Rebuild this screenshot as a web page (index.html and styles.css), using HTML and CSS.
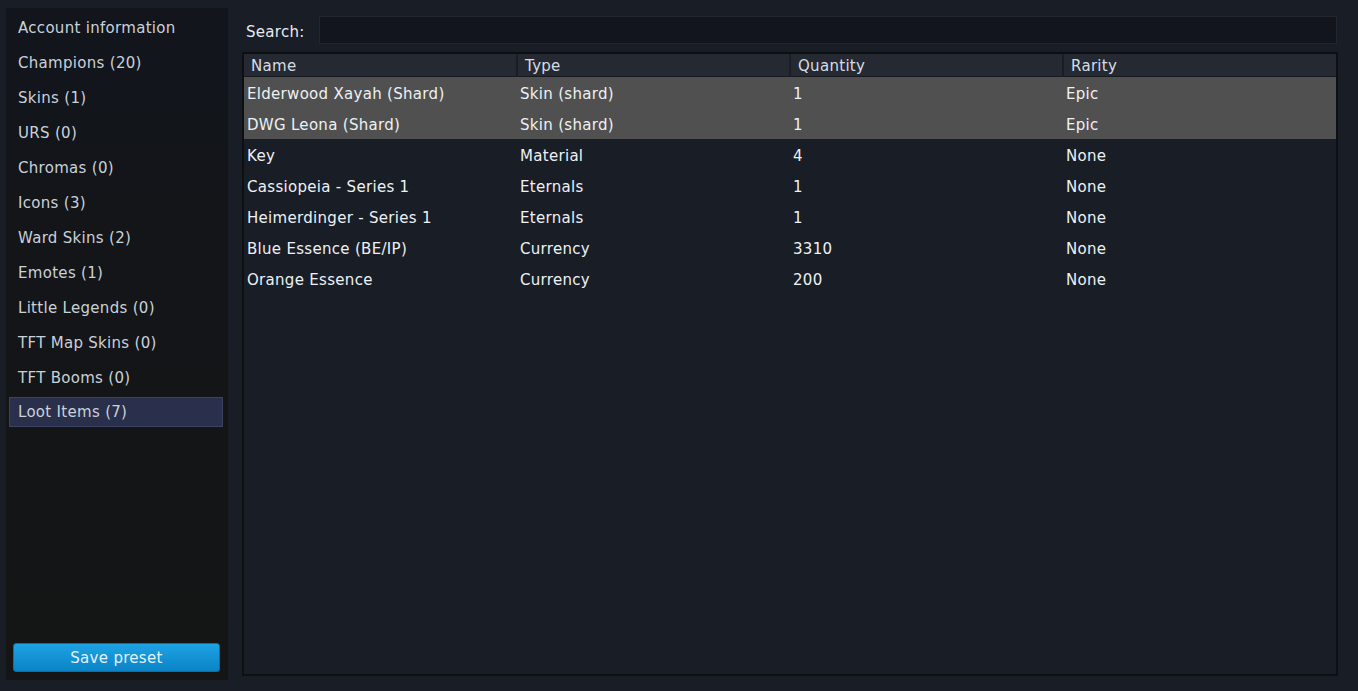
FILE: index.html
```html
<!DOCTYPE html>
<html>
<head>
    <title>Account Export</title>
    <link rel="stylesheet" href="styles.css">
</head>
<body>
    <div class="window">
        <div class="sidebar">
            <ul class="nav">
                <li>Account information</li>
                <li>Champions (20)</li>
                <li>Skins (1)</li>
                <li>URS (0)</li>
                <li>Chromas (0)</li>
                <li>Icons (3)</li>
                <li>Ward Skins (2)</li>
                <li>Emotes (1)</li>
                <li>Little Legends (0)</li>
                <li>TFT Map Skins (0)</li>
                <li>TFT Booms (0)</li>
                <li class="active">Loot Items (7)</li>
            </ul>
            <button class="btn-save">Save preset</button>
        </div>

        <div class="content">
            <div class="search-box">
                <label for="search">Search:</label>
                <input type="text" id="search">
            </div>

            <div class="table-wrap">
                <table>
                    <thead>
                        <tr>
                            <th>Name</th>
                            <th>Type</th>
                            <th>Quantity</th>
                            <th>Rarity</th>
                        </tr>
                    </thead>
                    <tbody>
                        <tr class="selected">
                            <td>Elderwood Xayah (Shard)</td>
                            <td>Skin (shard)</td>
                            <td>1</td>
                            <td>Epic</td>
                        </tr>
                        <tr class="selected">
                            <td>DWG Leona (Shard)</td>
                            <td>Skin (shard)</td>
                            <td>1</td>
                            <td>Epic</td>
                        </tr>
                        <tr>
                            <td>Key</td>
                            <td>Material</td>
                            <td>4</td>
                            <td>None</td>
                        </tr>
                        <tr>
                            <td>Cassiopeia - Series 1</td>
                            <td>Eternals</td>
                            <td>1</td>
                            <td>None</td>
                        </tr>
                        <tr>
                            <td>Heimerdinger - Series 1</td>
                            <td>Eternals</td>
                            <td>1</td>
                            <td>None</td>
                        </tr>
                        <tr>
                            <td>Blue Essence (BE/IP)</td>
                            <td>Currency</td>
                            <td>3310</td>
                            <td>None</td>
                        </tr>
                        <tr>
                            <td>Orange Essence</td>
                            <td>Currency</td>
                            <td>200</td>
                            <td>None</td>
                        </tr>
                    </tbody>
                </table>
            </div>
        </div>
    </div>
</body>
</html>
```

FILE: styles.css
```css
html, body {
    height: 100%;
}

body {
    margin: 0;
    background-color: #191d26;
    color: #e6ebf0;
    font-family: "DejaVu Sans", Verdana, sans-serif;
    font-size: 15px;
    letter-spacing: 0.3px;
}

.window {
    display: flex;
    height: 100%;
    padding: 8px 20px 11px 6px;
    box-sizing: border-box;
    gap: 14px;
}

/* left navigation */
.sidebar {
    width: 222px;
    flex-shrink: 0;
    display: flex;
    flex-direction: column;
    background: linear-gradient(#12151c, #141518 50%, #151515);
    padding: 4px 5px 8px 3px;
    box-sizing: border-box;
}

.nav {
    list-style: none;
    margin: 0;
    padding: 0;
    flex: 1;
}

.nav li {
    height: 35px;
    line-height: 29px;
    padding: 1px 0 0 8px;
    color: #c9d1da;
    box-sizing: border-box;
    border: 1px solid transparent;
}

.nav li.active {
    background-color: #2a2f4b;
    border-color: #3c4264;
    height: 30px;
    line-height: 28px;
    padding-top: 0;
}

.btn-save {
    margin: 0 3px 0 4px;
    height: 29px;
    border: 1px solid #0b6fa8;
    border-radius: 3px;
    background: linear-gradient(#1ea3e4, #0a83c6);
    color: #e4f2fb;
    font-family: inherit;
    font-size: 15px;
    letter-spacing: 0.3px;
    cursor: pointer;
}

.btn-save:hover {
    background: linear-gradient(#2aafef, #0d8ed5);
}

/* right side */
.content {
    flex: 1;
    display: flex;
    flex-direction: column;
    padding: 8px 0 4px 0;
}

.search-box {
    display: flex;
    align-items: center;
    gap: 14px;
    padding-left: 4px;
}

.search-box label {
    color: #e6ebf0;
    padding-top: 3px;
}

.search-box input {
    flex: 1;
    height: 28px;
    box-sizing: border-box;
    background-color: #12151c;
    border: 1px solid #22262f;
    color: #e6ebf0;
    margin-right: 1px;
}

.table-wrap {
    flex: 1;
    margin-top: 8px;
    border: 2px solid #0d0f13;
    background-color: #191d26;
}

table {
    width: 100%;
    border-collapse: collapse;
    table-layout: fixed;
}

th {
    background-color: #252932;
    color: #d6dde5;
    font-weight: normal;
    text-align: left;
    height: 21px;
    padding: 1px 0 0 7px;
    border-right: 2px solid #1a1d24;
    border-bottom: 1px solid #15181e;
}

th:last-child {
    border-right: none;
}

td {
    height: 29px;
    padding: 2px 0 0 3px;
    color: #edf1f4;
}

tr.selected td {
    background-color: #505050;
}
```
